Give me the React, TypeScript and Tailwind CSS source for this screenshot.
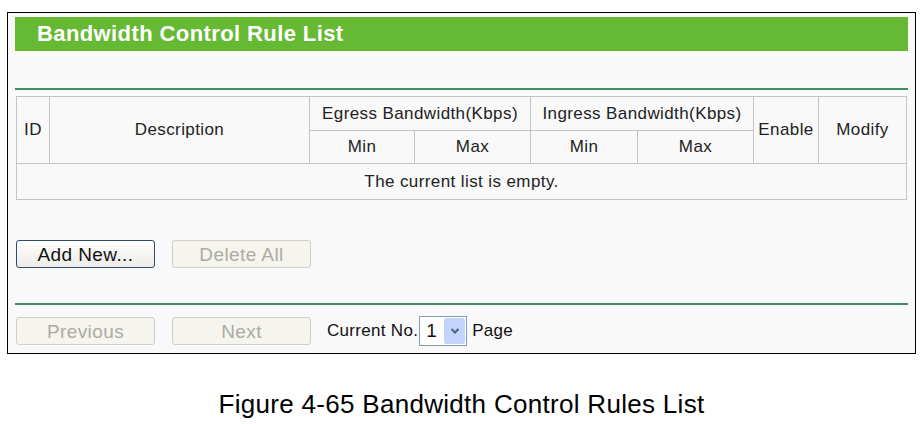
import React from 'react';

const cell = 'border border-[#c4c4c4] text-center font-normal text-[17px] tracking-[0.4px] text-[#222]';
const btn = 'w-[139px] h-[28px] rounded-[3px] border text-[19px] tracking-[0.4px] leading-none';
const btnOff = `${btn} border-[#cfcfc6] bg-[#f5f4ee] text-[#acaba4]`;

const App: React.FC = () => {
  return (
    <div className="w-[923px] h-[424px] bg-white font-['Liberation_Sans',Arial,sans-serif] overflow-hidden">
      <div className="pt-[12px] pl-[7px]">
        <div className="w-[909px] h-[342px] border border-black bg-[#f9f9f9] pt-[4px] pl-[7px] pr-[7px]">
          <div className="h-[34px] bg-[#66b933] flex items-center pl-[22px]">
            <h1 className="text-white font-bold text-[22px] tracking-[0.4px] leading-none">Bandwidth Control Rule List</h1>
          </div>
          <div className="h-[37px]" />
          <div className="h-[2px] bg-[#3f8c65]" />

          <div className="pt-[6px] pl-[1px]">
            <table className="border-collapse w-[890px] table-fixed">
              <colgroup>
                <col className="w-[33px]" />
                <col className="w-[260px]" />
                <col className="w-[105px]" />
                <col className="w-[116px]" />
                <col className="w-[107px]" />
                <col className="w-[116px]" />
                <col className="w-[65px]" />
                <col className="w-[88px]" />
              </colgroup>
              <thead>
                <tr className="h-[34px]">
                  <th rowSpan={2} className={cell}>ID</th>
                  <th rowSpan={2} className={cell}>Description</th>
                  <th colSpan={2} className={cell}>Egress Bandwidth(Kbps)</th>
                  <th colSpan={2} className={cell}>Ingress Bandwidth(Kbps)</th>
                  <th rowSpan={2} className={cell}>Enable</th>
                  <th rowSpan={2} className={cell}>Modify</th>
                </tr>
                <tr className="h-[33px]">
                  <th className={cell}>Min</th>
                  <th className={cell}>Max</th>
                  <th className={cell}>Min</th>
                  <th className={cell}>Max</th>
                </tr>
              </thead>
              <tbody>
                <tr className="h-[36px]">
                  <td colSpan={8} className={cell}>The current list is empty.</td>
                </tr>
              </tbody>
            </table>
          </div>

          <div className="flex gap-[17px] pl-[1px] pt-[40px]">
            <button className={`${btn} border-[#2f4b73] bg-gradient-to-b from-white to-[#ecebe6] text-[#111]`}>
              Add New...
            </button>
            <button disabled className={btnOff}>
              Delete All
            </button>
          </div>

          <div className="h-[35px]" />
          <div className="h-[2px] bg-[#3f8c65]" />

          <div className="flex items-center pl-[1px] pt-[11px]">
            <button disabled className={btnOff}>
              Previous
            </button>
            <button disabled className={`ml-[17px] ${btnOff}`}>
              Next
            </button>
            <span className="ml-[16px] text-[17px] tracking-[0.3px] text-[#111]">Current No.</span>
            <div className="ml-[1px] w-[48px] h-[30px] border border-[#7f9db9] bg-white flex items-center">
              <span className="flex-1 pl-[6px] text-[19px] text-[#111]">1</span>
              <span className="w-[21px] h-[26px] mr-[1px] bg-[#c4d5fb] rounded-[2px] flex items-center justify-center">
                <svg width="10" height="8" viewBox="0 0 10 8">
                  <path d="M1.5 2 L5 5.5 L8.5 2" fill="none" stroke="#4d6185" strokeWidth="2" />
                </svg>
              </span>
            </div>
            <span className="ml-[5px] text-[17px] tracking-[0.3px] text-[#111]">Page</span>
          </div>
        </div>
      </div>

      <div className="pt-[37px] text-center text-[26px] tracking-[0.3px] text-black leading-none">
        Figure 4-65 Bandwidth Control Rules List
      </div>
    </div>
  );
};

export default App;
